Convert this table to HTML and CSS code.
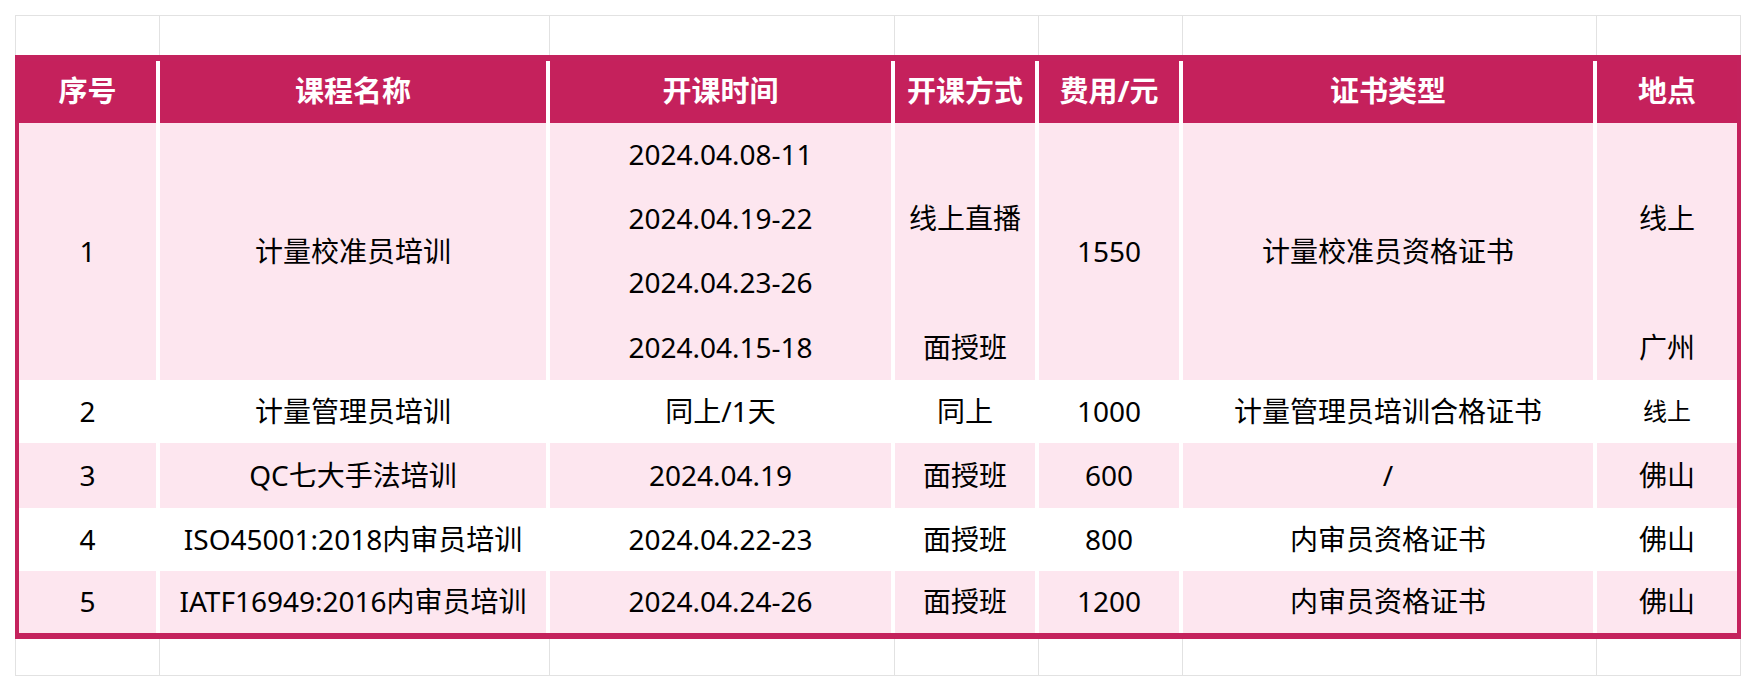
FILE: index.html
```html
<!DOCTYPE html>
<html lang="zh-CN">
<head>
<meta charset="utf-8">
<title>课程安排</title>
<link rel="stylesheet" href="styles.css">
</head>
<body>
<div class="sheet">
  <div class="grid-row grid-top">
    <span class="g1"></span><span class="g2"></span><span class="g3"></span><span class="g4"></span><span class="g5"></span><span class="g6"></span><span class="g7"></span>
  </div>
  <table class="course">
    <colgroup>
      <col class="c1"><col class="c2"><col class="c3"><col class="c4"><col class="c5"><col class="c6"><col class="c7">
    </colgroup>
    <thead>
      <tr class="head">
        <th>序号</th><th>课程名称</th><th>开课时间</th><th>开课方式</th><th>费用/元</th><th>证书类型</th><th>地点</th>
      </tr>
    </thead>
    <tbody>
      <tr class="pink sub">
        <td rowspan="4">1</td>
        <td rowspan="4">计量校准员培训</td>
        <td>2024.04.08-11</td>
        <td rowspan="3">线上直播</td>
        <td rowspan="4">1550</td>
        <td rowspan="4">计量校准员资格证书</td>
        <td rowspan="3">线上</td>
      </tr>
      <tr class="pink sub"><td>2024.04.19-22</td></tr>
      <tr class="pink sub"><td>2024.04.23-26</td></tr>
      <tr class="pink sub last"><td>2024.04.15-18</td><td>面授班</td><td>广州</td></tr>
      <tr class="white r2">
        <td>2</td><td>计量管理员培训</td><td>同上/1天</td><td>同上</td><td>1000</td><td>计量管理员培训合格证书</td><td class="small">线上</td>
      </tr>
      <tr class="pink r3">
        <td>3</td><td>QC七大手法培训</td><td>2024.04.19</td><td>面授班</td><td>600</td><td>/</td><td>佛山</td>
      </tr>
      <tr class="white r4">
        <td>4</td><td>ISO45001:2018内审员培训</td><td>2024.04.22-23</td><td>面授班</td><td>800</td><td>内审员资格证书</td><td>佛山</td>
      </tr>
      <tr class="pink r5">
        <td>5</td><td>IATF16949:2016内审员培训</td><td>2024.04.24-26</td><td>面授班</td><td>1200</td><td>内审员资格证书</td><td>佛山</td>
      </tr>
    </tbody>
  </table>
  <div class="grid-row grid-bottom">
    <span class="g1"></span><span class="g2"></span><span class="g3"></span><span class="g4"></span><span class="g5"></span><span class="g6"></span><span class="g7"></span>
  </div>
</div>
</body>
</html>
```
FILE: styles.css
```css
html, body {
  margin: 0;
  padding: 0;
  background: #ffffff;
}

.sheet {
  padding: 15px 0 0 15px;
  font-family: "Noto Sans", "Noto Sans CJK SC", sans-serif;
}

.grid-row {
  display: flex;
  width: 1726px;
  box-sizing: border-box;
  border-left: 1px solid #e2e2e2;
}

.grid-row span {
  box-sizing: border-box;
  border-right: 1px solid #e2e2e2;
  height: 100%;
}

.grid-top {
  height: 40px;
  border-top: 1px solid #e2e2e2;
}

.grid-bottom {
  height: 37px;
  border-bottom: 1px solid #e2e2e2;
}

.g1 { width: 144px; }
.g2 { width: 390px; }
.g3 { width: 345px; }
.g4 { width: 144px; }
.g5 { width: 144px; }
.g6 { width: 414px; }
.g7 { width: 144px; }

.course {
  box-sizing: border-box;
  width: 1726px;
  table-layout: fixed;
  border-collapse: separate;
  border-spacing: 0;
  border-style: solid;
  border-color: #c4225d;
  border-width: 6px 4px 6px 4px;
}

.c1 { width: 137px; }
.c2 { width: 390px; }
.c3 { width: 345px; }
.c4 { width: 144px; }
.c5 { width: 144px; }
.c6 { width: 414px; }
.c7 { width: 144px; }

.course th,
.course td {
  padding: 0 0 2px 0;
  text-align: center;
  vertical-align: middle;
  font-size: 28px;
  line-height: 36px;
  white-space: nowrap;
  border-left: 4px solid #ffffff;
}

.course th:first-child,
.course tr:not(.sub) td:first-child,
.course tr.sub:first-child td:first-child {
  border-left: none;
}

.course th {
  background: #c5215c;
  color: #ffffff;
  font-weight: 700;
  font-size: 29px;
}

.course td {
  color: #000000;
}

.head { height: 62px; }
.sub { height: 64px; }
.sub.last { height: 65px; }
.r2 { height: 63px; }
.r3 { height: 65px; }
.r4 { height: 63px; }
.r5 { height: 62px; }

.pink td { background: #fde6ef; }
.white td { background: #ffffff; }

.course td.small {
  font-size: 24px;
}
```
